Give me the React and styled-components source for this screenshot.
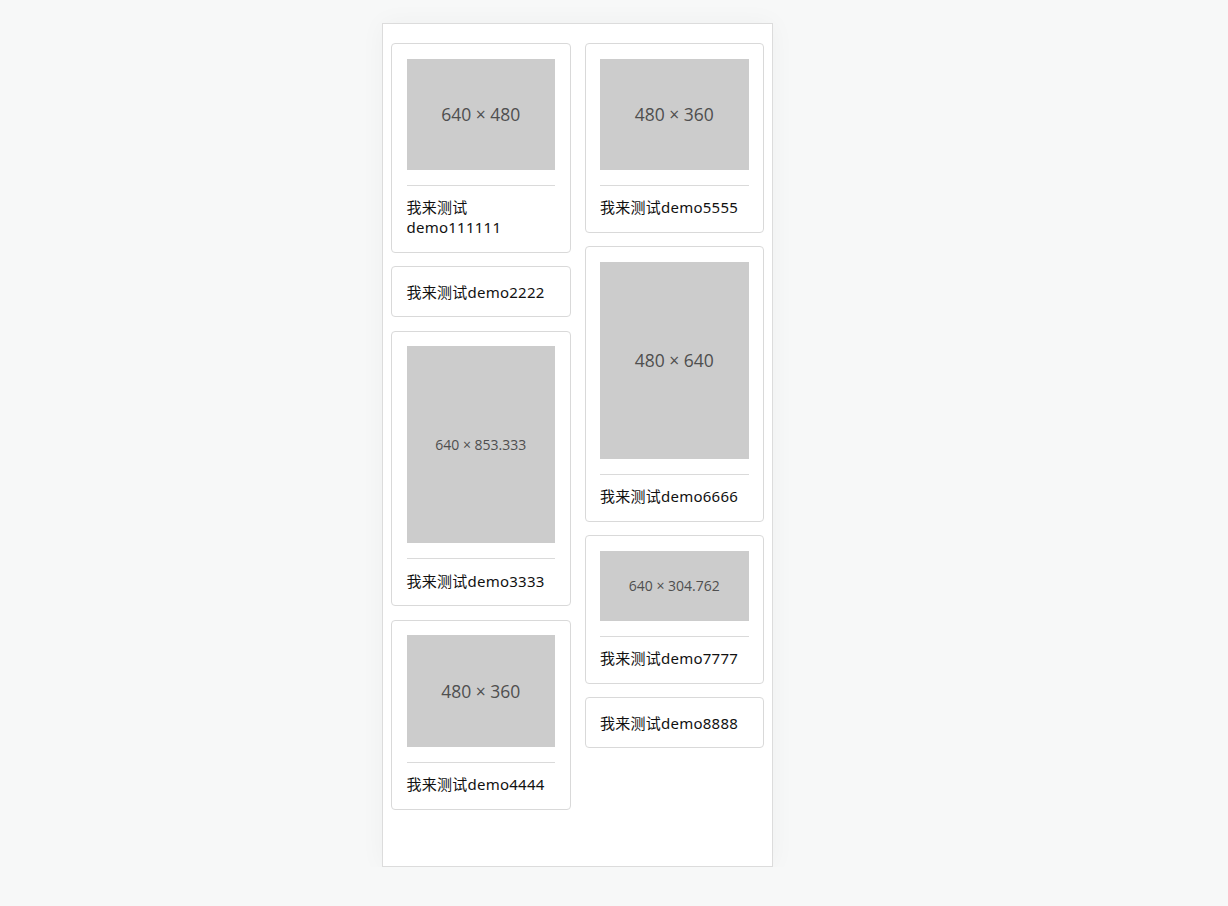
import React from "react";
import styled, { createGlobalStyle } from "styled-components";

const Global = createGlobalStyle`
  html, body { margin: 0; padding: 0; background: #f7f8f8; }
  body { font-family: "Noto Sans", "Noto Sans CJK SC", sans-serif; }
  * { box-sizing: border-box; }
`;

const Frame = styled.div`
  margin: 23px 0 0 382px;
  width: 391px;
  height: 844px;
  background: #fff;
  border: 1px solid #dcdcdc;
  box-shadow: 0 0 24px rgba(0, 0, 0, 0.04);
  padding: 19px 8px 0 8px;
`;

const Columns = styled.div`
  display: flex;
  gap: 14px;
  align-items: flex-start;
`;

const Column = styled.div`
  flex: 1 1 0;
  min-width: 0;
  display: flex;
  flex-direction: column;
  gap: 13.5px;
`;

const Card = styled.div`
  border: 1px solid #d9d9d9;
  border-radius: 4px;
  padding: 14.5px 14.5px 14.5px;
  background: #fff;
`;

const Media = styled.div`
  padding-bottom: 15px;
  border-bottom: 1px solid #dadada;
  margin-bottom: 11.5px;
`;

const Placeholder = styled.div`
  background: #cccccc;
  width: 100%;
  aspect-ratio: ${(p) => p.$w} / ${(p) => p.$h};
  display: flex;
  align-items: center;
  justify-content: center;
  font-family: "Open Sans", "Noto Sans", sans-serif;
  font-size: ${(p) => p.$fs}px;
  color: #4f4f4f;
`;

const Title = styled.div`
  font-size: 15px;
  line-height: 20px;
  letter-spacing: 0.25px;
  color: #111;
  word-break: break-word;
`;

const left = [
  { img: [640, 480], label: "640 × 480", fs: 17.5, title: "我来测试demo111111", wrap: true },
  { title: "我来测试demo2222" },
  { img: [640, 849], label: "640 × 853.333", fs: 14, title: "我来测试demo3333" },
  { img: [480, 360], label: "480 × 360", fs: 17.5, title: "我来测试demo4444" },
];

const right = [
  { img: [480, 360], label: "480 × 360", fs: 17.5, title: "我来测试demo5555" },
  { img: [480, 637], label: "480 × 640", fs: 17.5, title: "我来测试demo6666" },
  { img: [640, 300], label: "640 × 304.762", fs: 14, title: "我来测试demo7777" },
  { title: "我来测试demo8888" },
];

function Item({ item }) {
  return (
    <Card>
      {item.img && (
        <Media>
          <Placeholder $w={item.img[0]} $h={item.img[1]} $fs={item.fs}>
            {item.label}
          </Placeholder>
        </Media>
      )}
      <Title>
        {item.wrap ? (
          <>
            我来测试
            <br />
            demo111111
          </>
        ) : (
          item.title
        )}
      </Title>
    </Card>
  );
}

export default function App() {
  return (
    <>
      <Global />
      <Frame>
        <Columns>
          <Column>
            {left.map((it, i) => (
              <Item key={i} item={it} />
            ))}
          </Column>
          <Column>
            {right.map((it, i) => (
              <Item key={i} item={it} />
            ))}
          </Column>
        </Columns>
      </Frame>
    </>
  );
}
